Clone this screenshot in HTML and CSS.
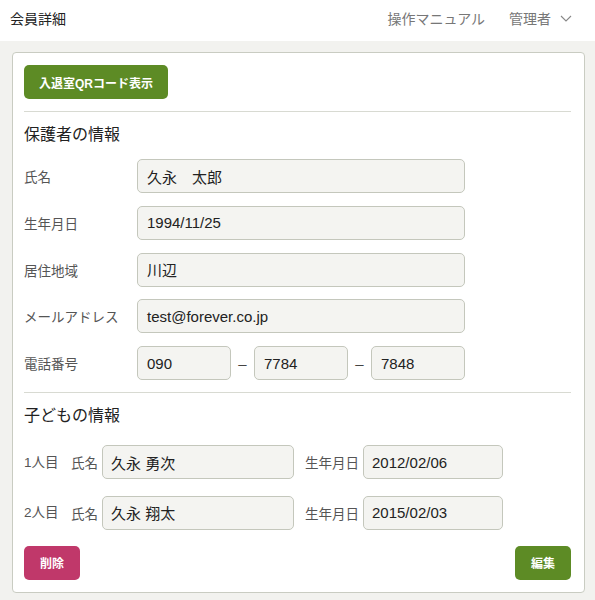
FILE: index.html
```html
<!DOCTYPE html>
<html lang="ja">
<head>
<meta charset="utf-8">
<title>会員詳細</title>
<link rel="stylesheet" href="styles.css">
</head>
<body>
<header class="topbar">
  <div class="title">会員詳細</div>
  <nav class="nav">
    <span class="nav-link">操作マニュアル</span>
    <span class="nav-user">管理者
      <svg class="chev" width="12" height="7" viewBox="0 0 12 7"><path d="M1 1 L6 6 L11 1" fill="none" stroke="#888" stroke-width="1.1"/></svg>
    </span>
  </nav>
</header>
<main class="main">
  <section class="card">
    <button class="btn btn-green btn-qr">入退室QRコード表示</button>
    <hr class="divider">
    <h2 class="section-title">保護者の情報</h2>
    <div class="rows">
      <div class="row"><span class="label">氏名</span><div class="field wide">久永　太郎</div></div>
      <div class="row"><span class="label">生年月日</span><div class="field wide">1994/11/25</div></div>
      <div class="row"><span class="label">居住地域</span><div class="field wide">川辺</div></div>
      <div class="row"><span class="label">メールアドレス</span><div class="field wide">test@forever.co.jp</div></div>
      <div class="row"><span class="label">電話番号</span>
        <div class="field tel">090</div><span class="dash">–</span>
        <div class="field tel">7784</div><span class="dash">–</span>
        <div class="field tel">7848</div>
      </div>
    </div>
    <hr class="divider">
    <h2 class="section-title kids-title">子どもの情報</h2>
    <div class="kids">
      <div class="kid-row">
        <span class="kid-no">1人目</span>
        <span class="kid-label">氏名</span><div class="field kid-name">久永 勇次</div>
        <span class="kid-label birth">生年月日</span><div class="field kid-birth">2012/02/06</div>
      </div>
      <div class="kid-row">
        <span class="kid-no">2人目</span>
        <span class="kid-label">氏名</span><div class="field kid-name">久永 翔太</div>
        <span class="kid-label birth">生年月日</span><div class="field kid-birth">2015/02/03</div>
      </div>
    </div>
    <div class="actions">
      <button class="btn btn-pink btn-small">削除</button>
      <button class="btn btn-green btn-small">編集</button>
    </div>
  </section>
</main>
</body>
</html>
```
FILE: styles.css
```css
* { box-sizing: border-box; }
html, body { margin: 0; padding: 0; }
body {
  background: #f2f2ef;
  font-family: "Liberation Sans", "Noto Sans CJK JP", sans-serif;
  color: #222;
  width: 595px;
}
.topbar {
  background: #fff;
  height: 41px;
  display: flex;
  align-items: center;
  justify-content: space-between;
  padding: 0 23px 0 10px;
}
.title { font-size: 14px; color: #222; margin-top: -5px; }
.nav { display: flex; align-items: center; gap: 24px; font-size: 14px; color: #777; margin-top: -5px; }
.nav-user { display: flex; align-items: center; gap: 9px; }
.chev { display: block; }
.main { padding: 11px 10px 8px 12px; }
.card {
  background: #fff;
  border: 1px solid #c9ccc2;
  border-radius: 4px;
  padding: 12px 12px 12px 11px;
}
.btn {
  border: none;
  border-radius: 5px;
  color: #fff;
  font-family: "Liberation Sans", "Noto Sans CJK JP", sans-serif;
  font-weight: bold;
  font-size: 12px;
  height: 34px;
  padding: 0;
  display: block;
}
.btn-green { background: #5d8b25; }
.btn-pink { background: #c0386a; }
.btn-qr { width: 144px; }
.btn-small { width: 56px; }
.divider { border: none; border-top: 1px solid #d8dad2; margin: 12px 1px 0 0; }
.section-title {
  font-size: 16px;
  font-weight: normal;
  color: #222;
  margin: 0;
  padding-top: 13px;
  line-height: 20px;
  height: 47px;
}
.rows { display: flex; flex-direction: column; gap: 12.75px; }
.row { display: flex; align-items: center; height: 34px; }
.label { width: 113px; font-size: 13.5px; color: #555; flex: none; }
.field {
  height: 34px;
  background: #f4f4f1;
  border: 1px solid #c4c7bc;
  border-radius: 5px;
  font-size: 15px;
  color: #222;
  padding: 0 9px;
  display: flex;
  align-items: center;
  flex: none;
}
.wide { width: 328px; }
.tel { width: 94px; }
.dash { width: 23px; text-align: center; font-size: 15px; color: #444; flex: none; }
.rows + .divider { margin-top: 12px; }
.kids-title { height: 52px; }
.kids { display: flex; flex-direction: column; gap: 16.5px; }
.kid-row { display: flex; align-items: center; height: 34px; }
.kid-no { width: 47px; font-size: 13.5px; color: #555; flex: none; margin-top: -3px; }
.kid-label { width: 31px; font-size: 13.5px; color: #555; flex: none; }
.kid-label.birth { width: 58px; margin-left: 11px; }
.kid-name { width: 192px; padding-left: 8px; }
.kid-birth { width: 140px; padding-left: 8px; }
.actions { display: flex; justify-content: space-between; margin-top: 16px; padding-right: 1px; }
```
